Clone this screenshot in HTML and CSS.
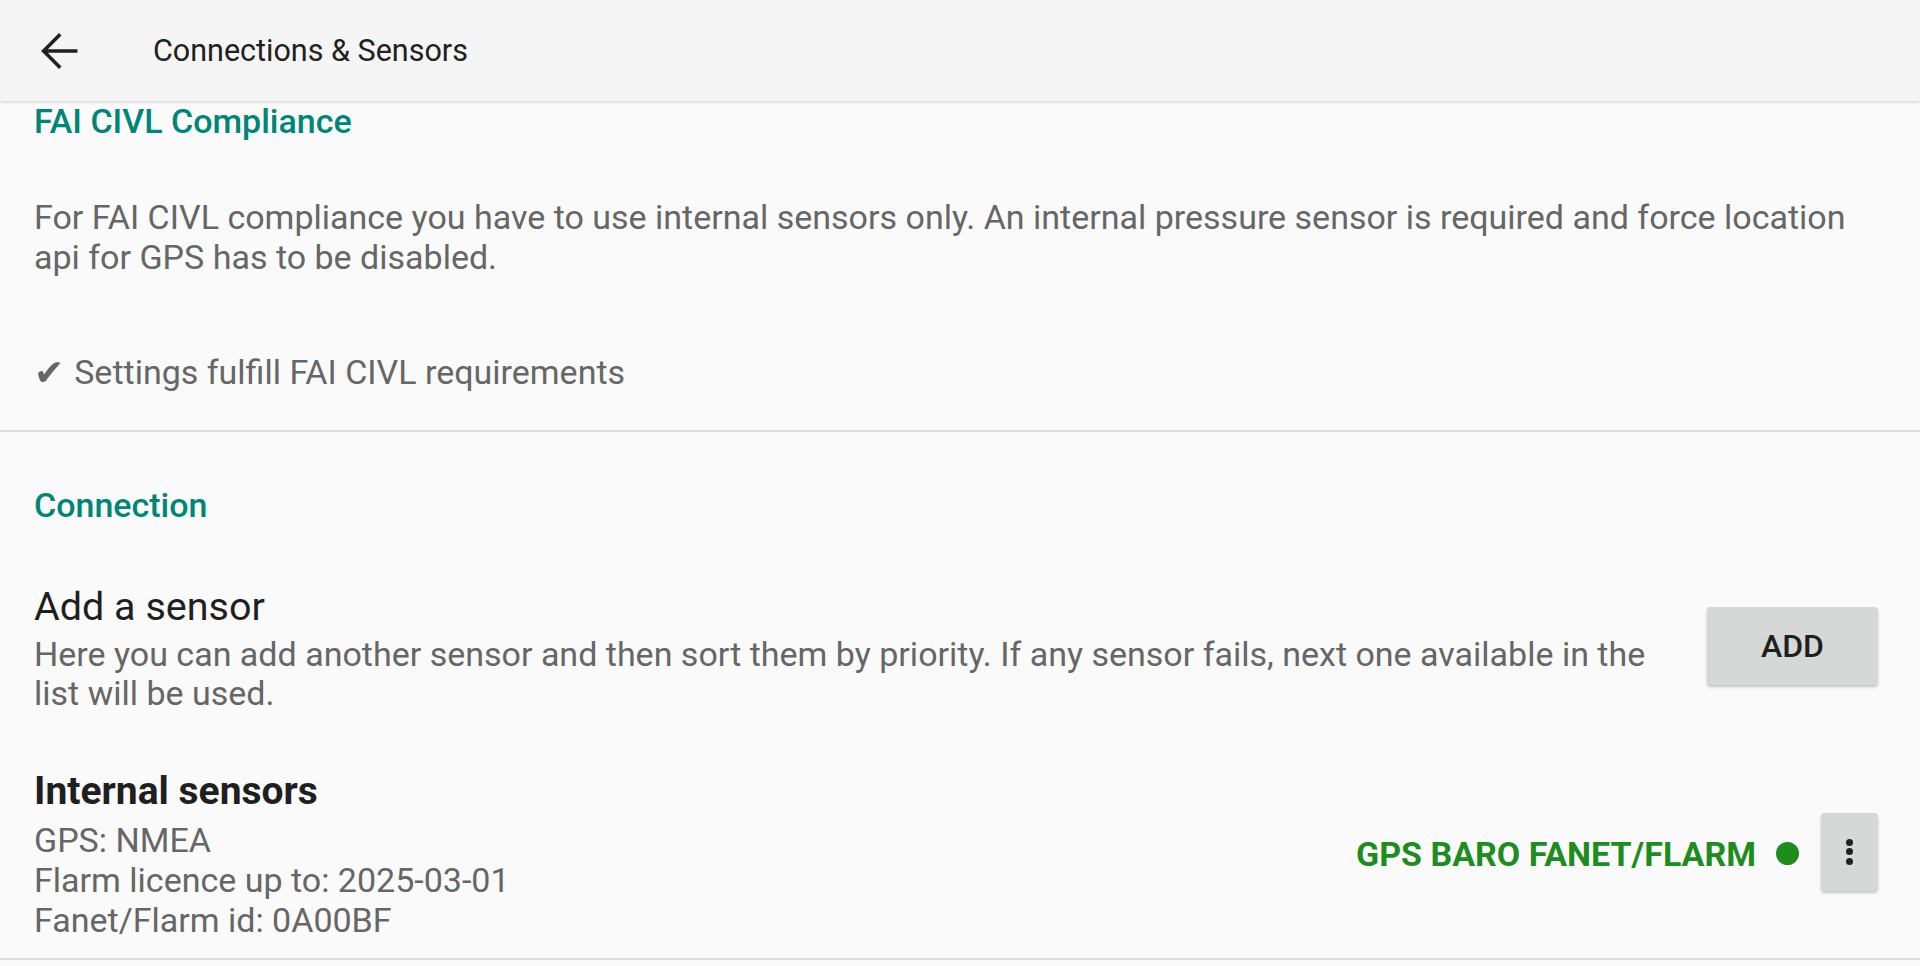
FILE: index.html
```html
<!DOCTYPE html>
<html>
<head>
<meta charset="utf-8">
<link rel="stylesheet" href="styles.css">
</head>
<body>
<header class="toolbar">
  <button class="back" aria-label="Back">
    <svg viewBox="0 0 24 24" width="50" height="50"><path d="M20 12H5.5M12 4.6L4.6 12l7.4 7.4" fill="none" stroke="#212121" stroke-width="1.7" stroke-linecap="square"/></svg>
  </button>
  <h1 class="title">Connections &amp; Sensors</h1>
</header>
<main class="content">
  <section class="section">
    <h2 class="cat">FAI CIVL Compliance</h2>
    <p class="body first">For FAI CIVL compliance you have to use internal sensors only. An internal pressure sensor is required and force location api for GPS has to be disabled.</p>
    <p class="body status"><span class="check">✔</span> Settings fulfill FAI CIVL requirements</p>
  </section>
  <section class="section second">
    <h2 class="cat">Connection</h2>
    <div class="pref add-row">
      <div class="pref-text">
        <div class="pref-title">Add a sensor</div>
        <div class="body">Here you can add another sensor and then sort them by priority. If any sensor fails, next one available in the list will be used.</div>
      </div>
      <button class="btn add">ADD</button>
    </div>
    <div class="pref sensor-row">
      <div class="pref-text">
        <div class="pref-title bold">Internal sensors</div>
        <div class="body detail">GPS: NMEA</div>
        <div class="body detail">Flarm licence up to: 2025-03-01</div>
        <div class="body detail">Fanet/Flarm id: 0A00BF</div>
      </div>
      <div class="sensor-status">
        <span class="caps">GPS BARO FANET/FLARM</span>
        <span class="dot"></span>
        <button class="btn more" aria-label="More"><span></span><span></span><span></span></button>
      </div>
    </div>
  </section>
</main>
</body>
</html>
```
FILE: styles.css
```css
html, body {
  margin: 0;
  padding: 0;
}
body {
  background: #fafafa;
  font-family: Roboto, "Liberation Sans", sans-serif;
  width: 1920px;
  height: 966px;
  overflow: hidden;
}
.toolbar {
  height: 101px;
  background: #f5f5f5;
  display: flex;
  align-items: center;
  box-shadow: 0 1px 3px rgba(0,0,0,0.18);
  position: relative;
  z-index: 1;
}
.back {
  border: 0;
  background: none;
  padding: 0;
  margin-left: 34px;
  width: 50px;
  height: 50px;
  display: flex;
}
.title {
  margin: 0 0 0 69px;
  font-size: 30.5px;
  font-weight: 400;
  color: #212121;
}
.content {
  padding: 0 42px 0 34px;
}
.section {
  border-bottom: 2px solid #dddddd;
  margin: 0 -42px 0 -34px;
  padding: 0 42px 0 34px;
}
.cat {
  margin: 0;
  font-size: 34px;
  line-height: 40px;
  font-weight: 500;
  color: #008577;
}
.body {
  margin: 0;
  font-size: 34px;
  line-height: 39.5px;
  color: #666666;
}
.first {
  margin-top: 57px;
}
.status {
  margin-top: 76px;
  padding-bottom: 37px;
  display: flex;
  align-items: center;
}
.check {
  font-family: "DejaVu Sans", sans-serif;
  font-size: 36px;
  margin-right: 10px;
}
.second {
  padding-top: 53px;
  padding-bottom: 18px;
}
.pref {
  display: flex;
  align-items: center;
}
.pref-text {
  flex: 1;
}
.add-row {
  margin-top: 58px;
}
.add-row .pref-text {
  margin-right: 50px;
}
.pref-title {
  font-size: 39.5px;
  line-height: 47px;
  color: #1f1f1f;
  margin-bottom: 5px;
}
.pref-title.bold {
  font-weight: 700;
  font-size: 39px;
}
.detail {
  line-height: 40px;
}
.sensor-row {
  margin-top: 54px;
}
.btn {
  border: 0;
  background: #d6d7d7;
  border-radius: 4px;
  box-shadow: 0 2px 3px rgba(0,0,0,0.22);
  font-family: Roboto, sans-serif;
  color: #1f1f1f;
}
.add {
  width: 171px;
  height: 78px;
  font-size: 32px;
  font-weight: 500;
  margin-top: -4px;
}
.sensor-status {
  display: flex;
  align-items: center;
}
.caps {
  font-size: 34px;
  font-weight: 700;
  color: #1e8c1e;
}
.dot {
  width: 23px;
  height: 23px;
  border-radius: 50%;
  background: #1e8c1e;
  margin-left: 20px;
  margin-right: 22px;
}
.more {
  width: 57px;
  height: 78px;
  display: flex;
  flex-direction: column;
  align-items: center;
  justify-content: center;
  gap: 2.5px;
  margin-top: -4px;
}
.more span {
  width: 7px;
  height: 7px;
  border-radius: 50%;
  background: #212121;
}
```
